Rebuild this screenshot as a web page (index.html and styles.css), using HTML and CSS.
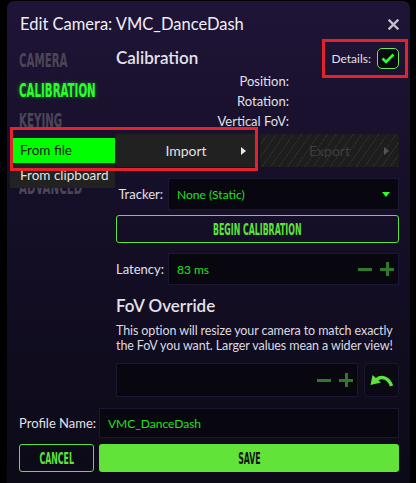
FILE: index.html
```html
<!DOCTYPE html>
<html lang="en">
<head>
    <meta charset="UTF-8">
    <meta name="viewport" content="width=device-width, initial-scale=1.0">
    <title>Edit Camera</title>
    <link rel="stylesheet" href="styles.css">
</head>
<body>

    <div class="dialog">
        <header class="dialog-head">
            <h1 class="dialog-title">Edit Camera: VMC_DanceDash</h1>
            <button class="close" aria-label="Close">
                <svg width="11" height="11" viewBox="0 0 11 11"><path d="M1.5 1.5 L9.5 9.5 M9.5 1.5 L1.5 9.5" stroke="#c4c0cc" stroke-width="2.4" stroke-linecap="square"/></svg>
            </button>
        </header>

        <div class="dialog-body">
            <nav class="tabs">
                <span class="tab"><span class="caps">Camera</span></span>
                <span class="tab active"><span class="caps">Calibration</span></span>
                <span class="tab"><span class="caps">Keying</span></span>
                <span class="tab tab-last"><span class="caps">Advanced</span></span>
            </nav>

            <section class="panel">
                <div class="panel-head">
                    <h2 class="section-title">Calibration</h2>
                    <label class="details">
                        Details:
                        <span class="check">
                            <svg width="14" height="11" viewBox="0 0 14 11"><path d="M1.5 5.5 L5 9 L12.5 1.5" fill="none" stroke="#2bff2b" stroke-width="2.6"/></svg>
                        </span>
                    </label>
                </div>

                <div class="readout">
                    <span>Position:</span>
                    <span>Rotation:</span>
                    <span>Vertical FoV:</span>
                </div>

                <div class="io-row">
                    <div class="import-wrap">
                        <button class="io-btn">Import <span class="tri-right"></span></button>
                        <ul class="menu">
                            <li class="menu-item hover">From file</li>
                            <li class="menu-item">From clipboard</li>
                        </ul>
                        <div class="mark"></div>
                    </div>
                    <button class="io-btn disabled">Export <span class="tri-right"></span></button>
                </div>

                <div class="field-row">
                    <span class="field-label tracker-label">Tracker:</span>
                    <div class="field">
                        <span class="value">None (Static)</span>
                        <span class="tri-down"></span>
                    </div>
                </div>

                <button class="outline-btn"><span class="caps">Begin Calibration</span></button>

                <div class="field-row latency-row">
                    <span class="field-label">Latency:</span>
                    <div class="field">
                        <span class="value">83 ms</span>
                        <span class="steppers">
                            <span class="minus"></span>
                            <span class="plus"></span>
                        </span>
                    </div>
                </div>

                <h2 class="section-title fov-title">FoV Override</h2>
                <p class="hint">This option will resize your camera to match exactly the FoV you want. Larger values mean a wider view!</p>

                <div class="fov-row">
                    <div class="field">
                        <span class="value"></span>
                        <span class="steppers">
                            <span class="minus"></span>
                            <span class="plus"></span>
                        </span>
                    </div>
                    <button class="undo" aria-label="Reset">
                        <svg width="24" height="15" viewBox="0 0 24 15"><path d="M21.5 13 C19 5 12 2.5 6.5 6.5" fill="none" stroke="#5ee33a" stroke-width="3.4"/><path d="M0.5 12 L2.5 2 L11 9.5 Z" fill="#5ee33a"/></svg>
                    </button>
                </div>
            </section>
        </div>

        <footer class="dialog-foot">
            <div class="profile-row">
                <span class="profile-label">Profile Name:</span>
                <div class="field"><span class="value">VMC_DanceDash</span></div>
            </div>
            <div class="actions">
                <button class="outline-btn cancel"><span class="caps">Cancel</span></button>
                <button class="save"><span class="caps">Save</span></button>
            </div>
        </footer>
    </div>

</body>
</html>
```

FILE: styles.css
```css
body {
    margin: 0;
    background: #000;
    font-family: 'Lato', 'Noto Sans', sans-serif;
    color: #e2e0e8;
    overflow: hidden;
}

button {
    font-family: inherit;
    cursor: pointer;
}

.dialog {
    margin: 1px 6px 0 7px;
    padding: 0 11px 0 12px;
    min-height: calc(100vh - 1px);
    box-sizing: border-box;
    border-radius: 7px 7px 0 0;
    background: linear-gradient(180deg, #1f1436 0%, #160f29 40%, #0c0a17 100%);
}

/* 标题栏 */
.dialog-head {
    display: flex;
    justify-content: space-between;
    align-items: center;
    padding-top: 9px;
    height: 28px;
}

.dialog-title {
    margin: 0 0 0 1px;
    font-size: 16.5px;
    font-weight: normal;
    line-height: 28px;
    color: #f0eef4;
}

.close {
    background: none;
    border: none;
    padding: 0;
    display: flex;
}

/* 大写窄体字 */
.caps {
    display: inline-block;
    font-family: 'Liberation Sans Narrow', 'DejaVu Sans Condensed', sans-serif;
    font-weight: bold;
    text-transform: uppercase;
    transform: scaleX(0.58);
}

.dialog-body {
    display: grid;
    grid-template-columns: 97px 283px;
}

.tabs {
    display: flex;
    flex-direction: column;
    gap: 8px;
    padding-top: 11px;
}

.tab {
    font-size: 19px;
    line-height: 22px;
    color: #4b4656;
    white-space: nowrap;
}

.tab .caps {
    transform: scaleX(0.6);
    transform-origin: left center;
}

.tab.active {
    color: #2bff2b;
    text-shadow: 0 0 6px rgba(43, 255, 43, 0.45);
}

.tab-last {
    margin-top: 37px;
}

.panel {
    padding-top: 9px;
}

.panel-head {
    display: flex;
    justify-content: space-between;
    align-items: center;
    height: 22px;
}

.section-title {
    margin: 0;
    font-size: 17px;
    font-weight: 600;
    line-height: 22px;
    color: #e4e2ea;
}

.details {
    display: flex;
    align-items: center;
    gap: 6px;
    font-size: 12px;
    outline: 3px solid #e3232b;
    outline-offset: 6px;
}

.check {
    width: 20px;
    height: 19px;
    border: 1px solid #6ee84a;
    border-radius: 5px;
    background: #0a0914;
    display: flex;
    align-items: center;
    justify-content: center;
}

.readout {
    display: flex;
    flex-direction: column;
    width: 173px;
    margin-top: 2px;
    text-align: right;
    font-size: 13px;
    line-height: 20px;
}

.io-row {
    display: flex;
    gap: 4px;
    margin-top: 3px;
    height: 33px;
}

.import-wrap {
    position: relative;
    width: 140px;
}

.io-btn {
    width: 100%;
    height: 33px;
    border: none;
    background: #212121;
    color: #e0e0e0;
    font-size: 14px;
    position: relative;
}

.io-row > .io-btn {
    width: 139px;
}

.io-btn.disabled {
    color: #3e3e3e;
    background: repeating-linear-gradient(125deg, #1d1d1d 0 6px, #2a2a2a 6px 7px);
    cursor: default;
}

.tri-right {
    position: absolute;
    right: 10px;
    top: 13px;
    border-left: 5px solid #e8e8e8;
    border-top: 4px solid transparent;
    border-bottom: 4px solid transparent;
}

.disabled .tri-right {
    border-left-color: #555;
}

/* 弹出菜单 */
.menu {
    position: absolute;
    left: -106px;
    top: 4px;
    width: 105px;
    margin: 0;
    padding: 0;
    list-style: none;
    z-index: 2;
}

.menu-item {
    height: 25px;
    line-height: 25px;
    padding-left: 10px;
    font-size: 13.5px;
    white-space: nowrap;
    background: #222;
    color: #e2e2e2;
}

.menu-item.hover {
    background: #00ff00;
    color: #1a1a1a;
}

.mark {
    position: absolute;
    left: -106px;
    top: -7px;
    width: 248px;
    height: 44px;
    box-sizing: border-box;
    border: 3px solid #e3232b;
    z-index: 3;
    pointer-events: none;
}

.field-row {
    display: flex;
    align-items: center;
    gap: 5px;
    margin-top: 11px;
}

.field-label {
    width: 47px;
    text-align: right;
    font-size: 13px;
    white-space: nowrap;
}

.field {
    flex: 1;
    height: 32px;
    box-sizing: border-box;
    border: 1px solid #1c1731;
    background: #08070f;
    display: flex;
    align-items: center;
    justify-content: space-between;
    padding: 0 4px 0 8px;
}

.value {
    color: #22e022;
    font-size: 12px;
}

.tri-down {
    margin-right: 4px;
    border-top: 5px solid #2bff2b;
    border-left: 4px solid transparent;
    border-right: 4px solid transparent;
}

.outline-btn {
    display: block;
    width: 100%;
    height: 28px;
    margin-top: 5px;
    border: 1.5px solid #5ee33a;
    border-radius: 3px;
    background: transparent;
    color: #5ee33a;
    font-size: 15px;
    padding: 0;
    white-space: nowrap;
}

.latency-row {
    margin-top: 10px;
}

.steppers {
    display: flex;
    gap: 8px;
    align-items: center;
}

.minus,
.plus {
    position: relative;
    width: 14px;
    height: 14px;
}

.minus::before,
.plus::before,
.plus::after {
    content: "";
    position: absolute;
    background: #2e7a2a;
}

.minus::before,
.plus::before {
    left: 0;
    top: 6px;
    width: 14px;
    height: 3px;
}

.plus::after {
    left: 6px;
    top: 0;
    width: 3px;
    height: 14px;
}

.fov-title {
    margin-top: 10px;
}

.hint {
    margin: 7px 0 0;
    font-size: 12.5px;
    letter-spacing: -0.1px;
    line-height: 14.5px;
    color: #dcdae2;
}

.fov-row {
    display: flex;
    gap: 6px;
    margin-top: 10px;
    height: 34px;
}

.fov-row .field {
    height: 34px;
}

.undo {
    width: 35px;
    height: 34px;
    border: 1px solid #1c1731;
    border-radius: 4px;
    background: #0a0914;
    padding: 0;
    display: flex;
    align-items: center;
    justify-content: center;
}

.dialog-foot {
    padding-top: 11px;
}

.profile-row {
    display: flex;
    align-items: center;
    gap: 5px;
    height: 30px;
}

.profile-label {
    width: 75px;
    font-size: 13px;
    white-space: nowrap;
}

.profile-row .field {
    height: 30px;
}

.actions {
    display: flex;
    gap: 5px;
    margin-top: 6px;
    height: 28px;
}

.actions .outline-btn {
    margin: 0;
    width: 75px;
}

.save {
    flex: 1;
    height: 28px;
    border: none;
    border-radius: 3px;
    background: #62e33a;
    color: #141414;
    font-size: 15px;
    padding: 0;
}
```
